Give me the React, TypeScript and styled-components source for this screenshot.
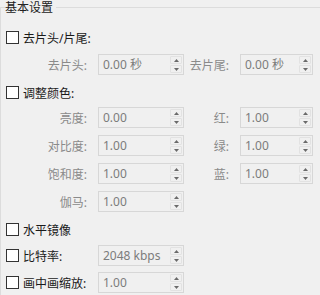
import styled, { createGlobalStyle } from 'styled-components';

const GlobalStyle = createGlobalStyle`
  html, body {
    margin: 0;
    padding: 0;
    background: #f0f0f0;
  }
  body {
    font-family: 'Noto Sans', 'Noto Sans CJK SC', sans-serif;
    font-size: 12px;
  }
`;

type SpinProps = { value: string; width: number };

const SpinBox = ({ value, width }: SpinProps) => (
  <Spin $width={width}>
    <SpinText>{value}</SpinText>
    <SpinButtons>
      <SpinButton>
        <svg width="5" height="3" viewBox="0 0 5 3">
          <path d="M2.5 0 L5 3 L0 3 Z" fill="#6a6a6a" />
        </svg>
      </SpinButton>
      <SpinButton>
        <svg width="5" height="3" viewBox="0 0 5 3">
          <path d="M0 0 L5 0 L2.5 3 Z" fill="#6a6a6a" />
        </svg>
      </SpinButton>
    </SpinButtons>
  </Spin>
);

const Check = ({ label }: { label: string }) => (
  <CheckWrap>
    <Box />
    <CheckLabel>{label}</CheckLabel>
  </CheckWrap>
);

const App = () => {
  return (
    <>
      <GlobalStyle />
      <Page>
        <Group>
          <Legend>基本设置</Legend>

          <CheckRow>
            <Check label="去片头/片尾:" />
          </CheckRow>

          <FieldGrid $mt={6}>
            <FieldLabel>去片头:</FieldLabel>
            <SpinBox value="0.00 秒" width={86} />
            <FieldLabel>去片尾:</FieldLabel>
            <SpinBox value="0.00 秒" width={73} />
          </FieldGrid>

          <CheckRow $mt={7}>
            <Check label="调整颜色:" />
          </CheckRow>

          <FieldGrid $mt={4}>
            <FieldLabel>亮度:</FieldLabel>
            <SpinBox value="0.00" width={86} />
            <FieldLabel>红:</FieldLabel>
            <SpinBox value="1.00" width={73} />

            <FieldLabel>对比度:</FieldLabel>
            <SpinBox value="1.00" width={86} />
            <FieldLabel>绿:</FieldLabel>
            <SpinBox value="1.00" width={73} />

            <FieldLabel>饱和度:</FieldLabel>
            <SpinBox value="1.00" width={86} />
            <FieldLabel>蓝:</FieldLabel>
            <SpinBox value="1.00" width={73} />

            <FieldLabel>伽马:</FieldLabel>
            <SpinBox value="1.00" width={86} />
          </FieldGrid>

          <CheckRow $mt={7}>
            <Check label="水平镜像" />
          </CheckRow>

          <CheckRow $mt={5}>
            <Check label="比特率:" />
            <SpinBox value="2048 kbps" width={86} />
          </CheckRow>

          <CheckRow $mt={6}>
            <Check label="画中画缩放:" />
            <SpinBox value="1.00" width={86} />
          </CheckRow>
        </Group>
      </Page>
    </>
  );
};

export default App;

const Page = styled.div`
  width: 320px;
  height: 295px;
  overflow: hidden;
  background: #f0f0f0;
`;

const Group = styled.fieldset`
  margin: 0;
  padding: 12px 0 40px 0;
  border: 1px solid #dcdcdc;
  border-right: none;
  min-width: 0;
  display: flex;
  flex-direction: column;
`;

const Legend = styled.legend`
  margin-left: 4px;
  padding: 0 3px 0 0;
  line-height: 15px;
  font-size: 12px;
  color: #222;
`;

const CheckRow = styled.div<{ $mt?: number }>`
  display: grid;
  grid-template-columns: 97px 86px;
  align-items: center;
  height: 21px;
  margin-top: ${({ $mt }) => $mt ?? 0}px;
`;

const CheckWrap = styled.label`
  display: flex;
  align-items: center;
  gap: 4px;
  padding-left: 5px;
`;

const Box = styled.span`
  display: inline-block;
  width: 11px;
  height: 11px;
  border: 1px solid #333;
  background: #fff;
`;

const CheckLabel = styled.span`
  color: #1a1a1a;
  font-size: 12px;
  white-space: nowrap;
`;

const FieldGrid = styled.div<{ $mt?: number }>`
  display: grid;
  grid-template-columns: 97px 86px 56px 73px;
  grid-auto-rows: 21px;
  row-gap: 7px;
  align-items: center;
  margin-top: ${({ $mt }) => $mt ?? 0}px;
`;

const FieldLabel = styled.span`
  text-align: right;
  padding-right: 11px;
  color: #8a8a8a;
  font-size: 12px;
  white-space: nowrap;
`;

const Spin = styled.div<{ $width: number }>`
  box-sizing: border-box;
  width: ${({ $width }) => $width}px;
  height: 21px;
  border: 1px solid #d7d7d7;
  background: #f0f0f0;
  display: flex;
  align-items: stretch;
`;

const SpinText = styled.span`
  flex: 1;
  padding-left: 4px;
  line-height: 19px;
  color: #7c7c7c;
  font-size: 12px;
  white-space: nowrap;
  overflow: hidden;
`;

const SpinButtons = styled.div`
  width: 12px;
  display: flex;
  flex-direction: column;
  padding: 1px 1px 1px 0;
  gap: 1px;
`;

const SpinButton = styled.div`
  flex: 1;
  border: 1px solid #e2e2e2;
  border-radius: 1px;
  display: flex;
  align-items: center;
  justify-content: center;
`;
